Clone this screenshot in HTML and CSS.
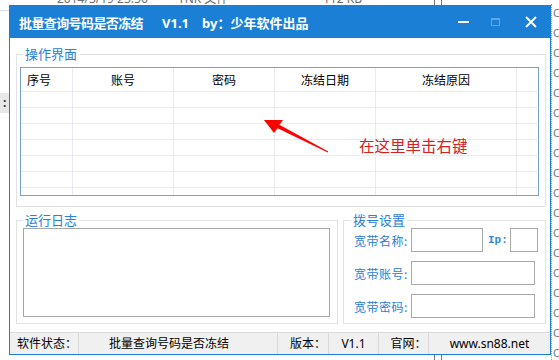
FILE: index.html
```html
<!DOCTYPE html>
<html>
<head>
<meta charset="utf-8">
<title>批量查询号码是否冻结</title>
<link rel="stylesheet" href="styles.css">
</head>
<body>

<div class="desk">
  <div class="desk-top">
    <span class="d-date">2014/3/19 23:56</span>
    <span class="d-type">TNK 文件</span>
    <span class="d-size">112 KB</span>
  </div>
  <div class="desk-rule"></div>
  <div class="desk-tab">:</div>
  <div class="desk-box top"></div>
  <div class="desk-box bottom"></div>
  <div class="desk-drives">
    <span>C:</span><span>C:</span><span>C:</span><span>C:</span><span>C:</span><span>C:</span>
    <span>C:</span><span>C:</span><span>C:</span><span>C:</span><span>C:</span><span>C:</span>
    <span>C:</span><span>C:</span><span>C:</span><span>C:</span><span>C:</span><span>C:</span>
  </div>
</div>

<div class="window">
  <div class="titlebar">
    <span class="title"><span class="t-name">批量查询号码是否冻结</span><span class="t-ver">V1.1</span><span class="t-by">by：少年软件出品</span></span>
    <span class="tbtn">
      <svg width="12" height="12" viewBox="0 0 12 12"><rect x="0" y="5" width="11" height="2" fill="#fff"/></svg>
    </span>
    <span class="tbtn">
      <svg width="12" height="12" viewBox="0 0 12 12"><rect x="1.5" y="2.5" width="8" height="7" fill="none" stroke="#5ea6e8"/><rect x="1.5" y="2.5" width="8" height="1.5" fill="#5ea6e8"/></svg>
    </span>
    <span class="tbtn close">
      <svg width="12" height="12" viewBox="0 0 12 12"><path d="M1 1 L11 11 M11 1 L1 11" stroke="#fff" stroke-width="1.8"/></svg>
    </span>
  </div>

  <div class="main">
    <fieldset class="group ops">
      <legend>操作界面</legend>
      <div class="list">
        <table>
          <tr class="head"><th class="c-no">序号</th><th class="c-acc">账号</th><th class="c-pwd">密码</th><th class="c-date">冻结日期</th><th class="c-why">冻结原因</th><th></th></tr>
          <tr><td></td><td></td><td></td><td></td><td></td><td></td></tr>
          <tr><td></td><td></td><td></td><td></td><td></td><td></td></tr>
          <tr><td></td><td></td><td></td><td></td><td></td><td></td></tr>
          <tr><td></td><td></td><td></td><td></td><td></td><td></td></tr>
          <tr><td></td><td></td><td></td><td></td><td></td><td></td></tr>
          <tr><td></td><td></td><td></td><td></td><td></td><td></td></tr>
          <tr><td></td><td></td><td></td><td></td><td></td><td></td></tr>
        </table>
        <svg class="arrow" width="70" height="40" viewBox="0 0 70 40">
          <polygon points="3,4 22,4 18.4,8.7 67.2,35.6 66.8,36.4 16.6,12.3 13,17" fill="#f00"/>
        </svg>
        <span class="hint">在这里单击右键</span>
      </div>
    </fieldset>

    <div class="lower">
      <fieldset class="group log">
        <legend>运行日志</legend>
        <textarea></textarea>
      </fieldset>
      <fieldset class="group dial">
        <legend>拨号设置</legend>
        <div class="row">
          <label>宽带名称:</label><input type="text" class="in-name"><span class="ip">Ip:</span><input type="text" class="in-ip">
        </div>
        <div class="row">
          <label>宽带账号:</label><input type="text" class="in-wide">
        </div>
        <div class="row">
          <label>宽带密码:</label><input type="text" class="in-wide">
        </div>
      </fieldset>
    </div>
  </div>

  <div class="status">
    <span class="s1">软件状态：</span>
    <span class="s2">批量查询号码是否冻结</span>
    <span class="s3">版本：</span>
    <span class="s4">V1.1</span>
    <span class="s5">官网：</span>
    <span class="s6">www.sn88.net</span>
  </div>
</div>

</body>
</html>
```

FILE: styles.css
```css
html, body {
  margin: 0;
  padding: 0;
}
body {
  width: 559px;
  height: 360px;
  overflow: hidden;
  position: relative;
  background-color: #ffffff;
  font-family: "Noto Sans", "Noto Sans CJK SC", sans-serif;
  font-size: 12px;
  color: #000;
}

/* desktop behind the window */
.desk {
  position: absolute;
  left: 0;
  top: 0;
  width: 559px;
  height: 360px;
}
.desk-top {
  position: absolute;
  top: -9px;
  left: 0;
  width: 559px;
  height: 16px;
  color: #6d6d6d;
  font-size: 12px;
  line-height: 16px;
}
.desk-top span {
  position: absolute;
}
.d-date { left: 57px; }
.d-type { left: 178px; }
.d-size { left: 323px; }
.desk-rule {
  position: absolute;
  left: 0;
  top: 10px;
  width: 9px;
  border-top: 1px solid #dcdcdc;
}
.desk-tab {
  position: absolute;
  left: 0;
  top: 93px;
  width: 9px;
  height: 20px;
  background-color: #e8e8e8;
  font-weight: bold;
  line-height: 20px;
  text-indent: 3px;
  color: #333;
}
.desk-box {
  position: absolute;
  left: 434px;
  width: 6px;
  height: 8px;
  border-left: 1px solid #777;
  border-right: 1px solid #777;
}
.desk-box.top { top: -2px; }
.desk-box.bottom { top: 354px; }
.desk-drives {
  position: absolute;
  left: 551px;
  top: 4px;
  width: 8px;
  height: 356px;
  border-left: 1px dotted #9a9a9a;
  display: flex;
  flex-direction: column;
  gap: 2px;
}
.desk-drives span {
  height: 18px;
  line-height: 18px;
  font-size: 11px;
  color: #777;
  padding-left: 1px;
}

/* window */
.window {
  position: absolute;
  left: 9px;
  top: 5px;
  width: 542px;
  height: 350px;
  box-sizing: border-box;
  border: 1px solid #1c7fd6;
  background-color: #ffffff;
  display: flex;
  flex-direction: column;
}
.titlebar {
  height: 32px;
  background-color: #1c7fd6;
  display: flex;
  align-items: center;
  padding-left: 9px;
  color: #fff;
}
.title {
  flex: 1;
  font-size: 13px;
  font-weight: bold;
  white-space: nowrap;
}
.t-name {
  letter-spacing: -0.6px;
}
.t-ver {
  margin-left: 19px;
}
.t-by {
  margin-left: 13px;
}
.tbtn {
  width: 32px;
  height: 32px;
  display: flex;
  align-items: center;
  justify-content: center;
}
.tbtn.close {
  width: 38px;
}

.main {
  flex: 1;
  padding: 8px 4px 0 6px;
}

.group {
  margin: 0;
  min-inline-size: 0;
  border: 1px solid #e2e2e2;
  box-sizing: border-box;
}
.group legend {
  font-size: 13px;
  line-height: 16px;
  color: #2a80d8;
  padding: 0 2px;
  font-family: "Noto Sans CJK SC", sans-serif;
}

.ops {
  padding: 5px 6px 10px 3px;
}
.ops legend {
  margin-left: 3px;
}

.list {
  position: relative;
  height: 129px;
  box-sizing: border-box;
  border: 1px solid #77a1cc;
  overflow: hidden;
}
.list table {
  border-collapse: collapse;
  table-layout: fixed;
  width: 516px;
}
.list th, .list td {
  padding: 0;
  border-right: 1px solid #e8ebef;
  border-bottom: 1px solid #e8ebef;
}
.list td {
  height: 15px;
}
.list th {
  height: 23px;
  font-weight: normal;
  font-size: 12px;
  text-align: center;
}
.list th:last-child, .list td:last-child {
  border-right: 0;
}
.list th.c-no {
  width: 45px;
  text-align: left;
  padding-left: 6px;
}
.c-acc, .c-pwd, .c-date { width: 100px; }
.c-why { width: 140px; }

.arrow {
  position: absolute;
  left: 240px;
  top: 48px;
}
.hint {
  position: absolute;
  left: 338px;
  top: 66px;
  font-size: 15.5px;
  line-height: 22px;
  color: #d8201e;
  font-family: "Noto Sans CJK SC", sans-serif;
}

.lower {
  display: flex;
  gap: 5px;
  margin-top: 5px;
}
.log {
  width: 322px;
  padding: 0 6px 6px 6px;
}
.log legend {
  margin-left: 0;
}
.log textarea {
  display: block;
  width: 307px;
  height: 89px;
  box-sizing: border-box;
  border: 1px solid #a6a6a6;
  resize: none;
  margin: 0;
}
.dial {
  width: 203px;
  padding: 0 7px 4px 10px;
  display: flex;
  flex-direction: column;
  gap: 9px;
}
.dial legend {
  margin-left: -3px;
}
.row {
  display: flex;
  align-items: center;
  height: 24px;
}
.row label {
  width: 57px;
  color: #2a80d8;
  font-size: 12px;
  letter-spacing: 0.5px;
  font-family: "Noto Sans CJK SC", sans-serif;
}
.row input {
  height: 24px;
  box-sizing: border-box;
  border: 1px solid #a9a9a9;
  margin: 0;
  padding: 0 3px;
}
.in-name { width: 72px; }
.in-ip { width: 28px; }
.in-wide { width: 124px; }
.ip {
  width: 22px;
  margin-left: 5px;
  font-family: "Liberation Mono", monospace;
  font-weight: bold;
  font-size: 11px;
  color: #3585d8;
}

.status {
  height: 22px;
  box-sizing: border-box;
  background-color: #f0f0f0;
  border-top: 1px solid #dadada;
  display: flex;
  font-size: 12px;
  line-height: 21px;
}
.status span {
  text-align: center;
  border-right: 1px solid #d9d9d9;
  box-sizing: border-box;
  white-space: nowrap;
}
.s1 { width: 69px; padding-left: 6px; }
.s2 { width: 199px; padding-right: 18px; }
.s3 { width: 51px; padding-left: 10px; }
.s4 { width: 50px; }
.s5 { width: 50px; padding-left: 10px; }
.s6 { flex: 1; border-right: 0 !important; }
```
